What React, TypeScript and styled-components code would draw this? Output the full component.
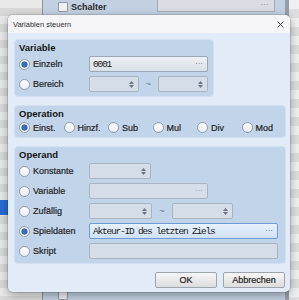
import React from "react";
import styled, { createGlobalStyle } from "styled-components";

const GlobalStyle = createGlobalStyle`
  html, body {
    margin: 0;
    padding: 0;
  }
  body {
    width: 299px;
    height: 300px;
    overflow: hidden;
    font-family: "Liberation Sans", Arial, sans-serif;
    color: #1a1a1a;
  }
`;

const Screen = styled.div`
  position: relative;
  width: 299px;
  height: 300px;
  display: flex;
  overflow: hidden;
  background: #e4e4e4;
`;

const ListColumn = styled.div`
  width: 42px;
  flex: none;
  display: flex;
  flex-direction: column;
  background: repeating-linear-gradient(#e9e9e9 0 8px, #d8d8d8 8px 16px);
`;

const SelectedRow = styled.div`
  margin-top: 200px;
  height: 15px;
  background: #2a6ad4;
`;

const EditorPanel = styled.div`
  width: 242px;
  flex: none;
  display: flex;
  flex-direction: column;
  justify-content: space-between;
  background: #c2d0e1;
  border-left: 1px solid #8a939d;
  border-right: 4px solid #959ea8;
`;

const PanelRow = styled.div<{ $bottom?: boolean }>`
  height: ${(p) => (p.$bottom ? "10px" : "13px")};
  display: flex;
  align-items: ${(p) => (p.$bottom ? "flex-end" : "center")};
  padding-left: 15px;
  gap: 3px;
  font-size: 9px;
  font-weight: bold;
  color: #2a2a2a;
`;

const Check = styled.span`
  width: 10px;
  height: 10px;
  box-sizing: border-box;
  border: 1px solid #8d96a2;
  background: #eef0f3;
  border-radius: 1px;
`;

const PanelField = styled.span`
  margin-left: 47px;
  width: 118px;
  height: 12px;
  align-self: flex-start;
  box-sizing: border-box;
  border: 1px solid #a2abb6;
  border-top: none;
  background: #d9dde3;
  display: flex;
  justify-content: flex-end;
  padding-right: 5px;
  font-weight: normal;
  font-size: 8px;
  color: #777;
`;

const RightStripes = styled.div`
  flex: 1;
  background: repeating-linear-gradient(#f0f0f0 0 9px, #dedede 9px 18px);
`;

const Dialog = styled.div`
  position: absolute;
  left: 8px;
  top: 15px;
  width: 282px;
  height: 277px;
  display: flex;
  flex-direction: column;
  background: #e1ecf8;
  border-radius: 5px;
  box-shadow: 0 3px 10px rgba(0, 0, 0, 0.35), 0 0 0 1px rgba(0, 0, 0, 0.1);
  overflow: hidden;
`;

const TitleBar = styled.div`
  height: 18px;
  flex: none;
  display: flex;
  align-items: center;
  justify-content: space-between;
  padding: 0 6px 0 5px;
  background: #f5f4f7;
  font-size: 7.5px;
  color: #333;
`;

const Body = styled.div`
  flex: 1;
  display: flex;
  flex-direction: column;
  align-items: flex-start;
  gap: 8px;
  padding: 6px 4px 5px 6px;
`;

const Group = styled.div<{ $width?: number }>`
  box-sizing: border-box;
  width: ${(p) => (p.$width ? `${p.$width}px` : "100%")};
  display: flex;
  flex-direction: column;
  gap: 3px;
  padding: 2px 6px 4px 4px;
  background: #c2d4ea;
  border: 1px solid #d2e0f1;
  border-radius: 4px;
`;

const GroupTitle = styled.div`
  height: 11px;
  line-height: 11px;
  font-size: 9.5px;
  font-weight: bold;
  color: #141414;
`;

const Rows = styled.div`
  display: flex;
  flex-direction: column;
  gap: 4px;
`;

const Row = styled.div`
  display: grid;
  grid-template-columns: 70px auto;
  align-items: center;
  height: 16px;
`;

const OpRow = styled.div`
  display: grid;
  grid-template-columns: repeat(6, 44.5px);
  align-items: center;
  height: 11px;
`;

const RadioLabel = styled.label`
  display: flex;
  align-items: center;
  gap: 3px;
  font-size: 9px;
  color: #1e1e1e;
  -webkit-text-stroke: 0.2px #1e1e1e;
  white-space: nowrap;
`;

const RadioDot = styled.span<{ $checked?: boolean }>`
  width: 11px;
  height: 11px;
  flex: none;
  box-sizing: border-box;
  border-radius: 50%;
  border: 1px solid #8e9cb0;
  background: ${(p) =>
    p.$checked
      ? "radial-gradient(circle, #3b68c6 0 2.8px, #fdfdfd 3.4px)"
      : "linear-gradient(#ffffff, #eceff4)"};
`;

const Controls = styled.div`
  display: flex;
  align-items: center;
`;

const Field = styled.div<{ $w: number; $kind?: "pick" | "active" | "off" }>`
  box-sizing: border-box;
  width: ${(p) => p.$w}px;
  height: 16px;
  display: flex;
  align-items: center;
  justify-content: space-between;
  padding: 0 4px 0 3px;
  border: 1px solid
    ${(p) => (p.$kind === "active" ? "#6f9bd4" : p.$kind === "pick" ? "#9ca7b5" : "#a9b4c2")};
  border-radius: 2px;
  background: ${(p) =>
    p.$kind === "active"
      ? "linear-gradient(#e8f1fc, #cfe0f5)"
      : p.$kind === "pick"
      ? "linear-gradient(#eef1f5, #d9dfe7)"
      : "#d4dde8"};
  font-family: "Liberation Mono", "DejaVu Sans Mono", monospace;
  font-size: 9.5px;
  letter-spacing: -1.2px;
  color: #1a1a1a;
`;

const Dots = styled.span<{ $faint?: boolean }>`
  font-family: "Liberation Sans", Arial, sans-serif;
  font-size: 8px;
  letter-spacing: 0;
  line-height: 8px;
  color: ${(p) => (p.$faint ? "#8a96a6" : "#555")};
`;

const Spin = styled.span`
  display: flex;
  flex-direction: column;
  align-items: center;
  gap: 1px;
  svg {
    display: block;
  }
`;

const Tilde = styled.span<{ $w: number }>`
  width: ${(p) => p.$w}px;
  text-align: center;
  font-size: 9px;
  color: #6a7686;
`;

const Footer = styled.div`
  align-self: flex-end;
  margin-top: auto;
  display: flex;
  gap: 6px;
  padding-right: 1px;
`;

const Button = styled.button`
  width: 62px;
  height: 16px;
  padding: 0;
  font-family: "Liberation Sans", Arial, sans-serif;
  font-size: 9px;
  color: #1e1e1e;
  -webkit-text-stroke: 0.2px #1e1e1e;
  border: 1px solid #9ea4ac;
  border-radius: 2px;
  background: linear-gradient(#f7f7f7, #dcdcdc);
`;

const SpinArrows = () => (
  <Spin>
    <svg width="5" height="3" viewBox="0 0 5 3">
      <path d="M2.5 0 L5 3 L0 3 Z" fill="#6c7480" />
    </svg>
    <svg width="5" height="3" viewBox="0 0 5 3">
      <path d="M0 0 L5 0 L2.5 3 Z" fill="#6c7480" />
    </svg>
  </Spin>
);

const Radio = ({ label, checked }: { label: string; checked?: boolean }) => (
  <RadioLabel>
    <RadioDot $checked={checked} />
    {label}
  </RadioLabel>
);

const operations = ["Einst.", "Hinzf.", "Sub", "Mul", "Div", "Mod"];

const App: React.FC = () => {
  return (
    <Screen>
      <GlobalStyle />
      <ListColumn>
        <SelectedRow />
      </ListColumn>
      <EditorPanel>
        <PanelRow>
          <Check />
          Schalter
          <PanelField>···</PanelField>
        </PanelRow>
        <PanelRow $bottom>
          <Check />
        </PanelRow>
      </EditorPanel>
      <RightStripes />

      <Dialog>
        <TitleBar>
          Variablen steuern
          <svg width="7" height="7" viewBox="0 0 7 7">
            <path d="M0.5 0.5 L6.5 6.5 M6.5 0.5 L0.5 6.5" stroke="#333" strokeWidth="0.9" />
          </svg>
        </TitleBar>
        <Body>
          <Group $width={200}>
            <GroupTitle>Variable</GroupTitle>
            <Rows>
              <Row>
                <Radio label="Einzeln" checked />
                <Field $w={119} $kind="pick">
                  0001
                  <Dots>···</Dots>
                </Field>
              </Row>
              <Row>
                <Radio label="Bereich" />
                <Controls>
                  <Field $w={50}>
                    <span />
                    <SpinArrows />
                  </Field>
                  <Tilde $w={19}>~</Tilde>
                  <Field $w={50}>
                    <span />
                    <SpinArrows />
                  </Field>
                </Controls>
              </Row>
            </Rows>
          </Group>

          <Group>
            <GroupTitle>Operation</GroupTitle>
            <OpRow>
              {operations.map((op, i) => (
                <Radio key={op} label={op} checked={i === 0} />
              ))}
            </OpRow>
          </Group>

          <Group>
            <GroupTitle>Operand</GroupTitle>
            <Rows>
              <Row>
                <Radio label="Konstante" />
                <Controls>
                  <Field $w={62}>
                    <span />
                    <SpinArrows />
                  </Field>
                </Controls>
              </Row>
              <Row>
                <Radio label="Variable" />
                <Controls>
                  <Field $w={119}>
                    <span />
                    <Dots $faint>···</Dots>
                  </Field>
                </Controls>
              </Row>
              <Row>
                <Radio label="Zufällig" />
                <Controls>
                  <Field $w={63}>
                    <span />
                    <SpinArrows />
                  </Field>
                  <Tilde $w={20}>~</Tilde>
                  <Field $w={61}>
                    <span />
                    <SpinArrows />
                  </Field>
                </Controls>
              </Row>
              <Row>
                <Radio label="Spieldaten" checked />
                <Field $w={189} $kind="active">
                  Akteur-ID des letzten Ziels
                  <Dots>···</Dots>
                </Field>
              </Row>
              <Row>
                <Radio label="Skript" />
                <Field $w={189} />
              </Row>
            </Rows>
          </Group>

          <Footer>
            <Button>OK</Button>
            <Button>Abbrechen</Button>
          </Footer>
        </Body>
      </Dialog>
    </Screen>
  );
};

export default App;
